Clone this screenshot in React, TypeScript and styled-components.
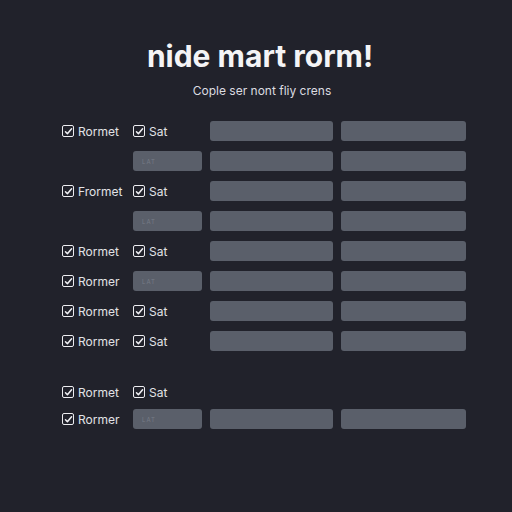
import React from 'react'
import styled, { createGlobalStyle } from 'styled-components'

const Global = createGlobalStyle`
  html, body {
    margin: 0;
    padding: 0;
    background: #21222b;
  }
  * { box-sizing: border-box; }
`

const Page = styled.div`
  width: 512px;
  height: 512px;
  background: #21222b;
  font-family: Inter, "Open Sans", sans-serif;
  color: #e6e6ea;
  padding-top: 38px;
  overflow: hidden;
`

const Header = styled.header`
  display: flex;
  flex-direction: column;
  align-items: center;
`

const Title = styled.h1`
  margin: 0;
  font-size: 30px;
  line-height: 36px;
  font-weight: 700;
  letter-spacing: 0;
  color: #f4f4f6;
  transform: translateX(4px);
`

const Subtitle = styled.p`
  margin: 9px 0 3px;
  font-size: 12px;
  line-height: 16px;
  color: #dcdce0;
  transform: translateX(6px);
`

const Grid = styled.div<{ $gap: number; $top: number }>`
  display: grid;
  grid-template-columns: 63px 69px 123px 125px;
  column-gap: 8px;
  row-gap: ${p => p.$gap}px;
  grid-auto-rows: 20px;
  margin: ${p => p.$top}px 0 0 62px;
`

const Check = styled.label`
  display: flex;
  align-items: center;
  gap: 4px;
  font-size: 12px;
  color: #e2e2e6;
  white-space: nowrap;
`

const Box = styled.span`
  width: 12px;
  height: 12px;
  border: 1.5px solid #ececf0;
  border-radius: 2px;
  display: flex;
  align-items: center;
  justify-content: center;
  flex-shrink: 0;
`

const Bar = styled.div`
  background: #5a5f6a;
  border-radius: 3px;
  height: 20px;
  display: flex;
  align-items: center;
  padding-left: 9px;
  font-size: 6px;
  letter-spacing: 1px;
  color: #767b86;
`

const Empty = styled.div``

type Row = { label?: string; sat: 'check' | 'bar' | 'none'; bars: boolean }

const topRows: Row[] = [
  { label: 'Rormet', sat: 'check', bars: true },
  { sat: 'bar', bars: true },
  { label: 'Frormet', sat: 'check', bars: true },
  { sat: 'bar', bars: true },
  { label: 'Rormet', sat: 'check', bars: true },
  { label: 'Rormer', sat: 'bar', bars: true },
  { label: 'Rormet', sat: 'check', bars: true },
  { label: 'Rormer', sat: 'check', bars: true },
]

const bottomRows: Row[] = [
  { label: 'Rormet', sat: 'check', bars: false },
  { label: 'Rormer', sat: 'bar', bars: true },
]

function CheckBox({ text }: { text: string }) {
  return (
    <Check>
      <Box>
        <svg width="9" height="9" viewBox="0 0 9 9" fill="none">
          <path d="M1.5 4.8 L3.4 6.8 L7.6 1.8" stroke="#f0f0f4" strokeWidth="1.5" strokeLinecap="round" strokeLinejoin="round" />
        </svg>
      </Box>
      {text}
    </Check>
  )
}

function Rows({ rows }: { rows: Row[] }) {
  return (
    <>
      {rows.map((r, i) => (
        <React.Fragment key={i}>
          {r.label ? <CheckBox text={r.label} /> : <Empty />}
          {r.sat === 'check' && <CheckBox text="Sat" />}
          {r.sat === 'bar' && <Bar>LAT</Bar>}
          {r.sat === 'none' && <Empty />}
          {r.bars ? <Bar /> : <Empty />}
          {r.bars ? <Bar /> : <Empty />}
        </React.Fragment>
      ))}
    </>
  )
}

export default function App() {
  return (
    <Page>
      <Global />
      <Header>
        <Title>nide mart rorm!</Title>
        <Subtitle>Cople ser nont fliy crens</Subtitle>
      </Header>
      <Grid $gap={10} $top={19}>
        <Rows rows={topRows} />
      </Grid>
      <Grid $gap={7} $top={31}>
        <Rows rows={bottomRows} />
      </Grid>
    </Page>
  )
}
